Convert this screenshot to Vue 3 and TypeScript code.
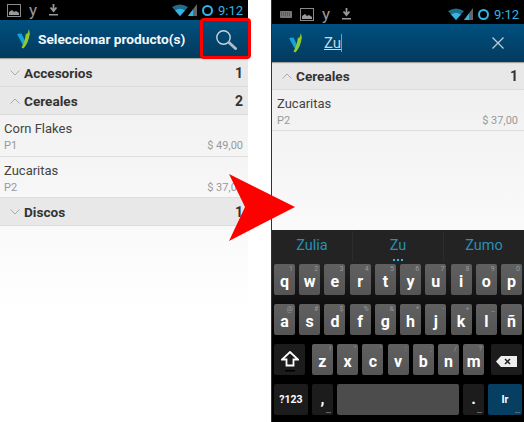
<script setup lang="ts">
const row1 = [
  ['q', '1'], ['w', '2'], ['e', '3'], ['r', '4'], ['t', '5'],
  ['y', '6'], ['u', '7'], ['i', '8'], ['o', '9'], ['p', '0']
]
const row2 = [
  ['a', '@'], ['s', '#'], ['d', '$'], ['f', '%'], ['g', '&'],
  ['h', '*'], ['j', '-'], ['k', '+'], ['l', '_'], ['ñ', '']
]
const row3 = [
  ['z', '!'], ['x', '"'], ['c', "'"], ['v', ':'], ['b', ';'], ['n', '/'], ['m', '?']
]
const suggestions = ['Zulia', 'Zu', 'Zumo']
</script>

<template>
  <div class="page">
    <div class="phone left">
      <div class="status">
        <div class="status-left">
          <svg class="ic-pic" width="14" height="13" viewBox="0 0 14 13">
            <rect x="0.5" y="0.5" width="13" height="12" fill="none" stroke="#8a8a8a" />
            <path d="M2 11 L2 8 L5 6 L7 8 L9 7 L12 9 L12 11 Z" fill="#9a9a9a" />
          </svg>
          <span class="ic-y">y</span>
          <svg class="ic-dl" width="9" height="12" viewBox="0 0 9 12">
            <path d="M4.5 0 V6 M1.5 3.5 L4.5 7 L7.5 3.5" fill="none" stroke="#9a9a9a" stroke-width="1.8" />
            <rect x="0" y="10" width="9" height="1.5" fill="#9a9a9a" />
          </svg>
        </div>
        <div class="status-right">
          <svg width="25" height="12" viewBox="0 0 25 12">
            <path d="M0 3 Q8 -2 16 3 L8 12 Z" fill="#1f6d8a" />
            <path d="M3 6.5 Q8 3 13 6.5 L8 12 Z" fill="#33b5e5" />
            <path d="M16 12 L25 0 V12 Z" fill="#666" />
            <path d="M16 12 L21 5.5 V12 Z" fill="#33b5e5" />
          </svg>
          <span class="ring"></span>
          <span class="clock">9:12</span>
        </div>
      </div>
      <div class="bar">
        <svg class="logo" width="13" height="20" viewBox="0 0 13 20">
          <path d="M0 5 L4.5 4.5 L8.5 13 L6.5 17 Z" fill="#12a5d6" />
          <path d="M12 0 L12.8 5 C11.8 11 10 16 6.5 19.5 L4.5 18.5 C7 14.5 8.2 9.5 8.8 5 L10.5 4.5 Z" fill="#8fcb2e" />
        </svg>
        <span class="title">Seleccionar producto(s)</span>
        <svg class="search" width="21" height="20" viewBox="0 0 21 20">
          <circle cx="7.5" cy="7.5" r="6.7" fill="none" stroke="#c9d3da" stroke-width="1.4" />
          <path d="M13 12.5 L19.5 18.5" stroke="#aebcc6" stroke-width="3" stroke-linecap="round" />
        </svg>
      </div>
      <div class="list">
        <div class="group">
          <svg class="chev" width="10" height="6" viewBox="0 0 10 6"><path d="M0.5 0.5 L5 5 L9.5 0.5" fill="none" stroke="#aaa" /></svg>
          <span class="group-name">Accesorios</span>
          <span class="group-count">1</span>
        </div>
        <div class="group">
          <svg class="chev" width="10" height="6" viewBox="0 0 10 6"><path d="M0.5 5.5 L5 1 L9.5 5.5" fill="none" stroke="#aaa" /></svg>
          <span class="group-name">Cereales</span>
          <span class="group-count">2</span>
        </div>
        <div class="item first">
          <div class="item-name">Corn Flakes</div>
          <div class="item-sub"><span>P1</span><span>$ 49,00</span></div>
        </div>
        <div class="item">
          <div class="item-name">Zucaritas</div>
          <div class="item-sub"><span>P2</span><span>$ 37,00</span></div>
        </div>
        <div class="group">
          <svg class="chev" width="10" height="6" viewBox="0 0 10 6"><path d="M0.5 0.5 L5 5 L9.5 0.5" fill="none" stroke="#aaa" /></svg>
          <span class="group-name">Discos</span>
          <span class="group-count">1</span>
        </div>
      </div>
    </div>

    <div class="phone right">
      <div class="status">
        <div class="status-left">
          <svg class="ic-kb" width="12" height="7" viewBox="0 0 12 7">
            <rect width="12" height="7" rx="1" fill="#777" />
            <path d="M1 2 H11 M1 4 H11" stroke="#444" stroke-dasharray="1 1" />
          </svg>
          <svg class="ic-pic" width="14" height="13" viewBox="0 0 14 13">
            <rect x="0.5" y="0.5" width="13" height="12" fill="none" stroke="#8a8a8a" />
            <path d="M2 11 L2 8 L5 6 L7 8 L9 7 L12 9 L12 11 Z" fill="#9a9a9a" />
          </svg>
          <span class="ic-y">y</span>
          <svg class="ic-dl" width="9" height="12" viewBox="0 0 9 12">
            <path d="M4.5 0 V6 M1.5 3.5 L4.5 7 L7.5 3.5" fill="none" stroke="#9a9a9a" stroke-width="1.8" />
            <rect x="0" y="10" width="9" height="1.5" fill="#9a9a9a" />
          </svg>
        </div>
        <div class="status-right">
          <svg width="25" height="12" viewBox="0 0 25 12">
            <path d="M0 3 Q8 -2 16 3 L8 12 Z" fill="#1f6d8a" />
            <path d="M3 6.5 Q8 3 13 6.5 L8 12 Z" fill="#33b5e5" />
            <path d="M16 12 L25 0 V12 Z" fill="#666" />
            <path d="M16 12 L21 5.5 V12 Z" fill="#33b5e5" />
          </svg>
          <span class="ring"></span>
          <span class="clock">9:12</span>
        </div>
      </div>
      <div class="bar search-bar">
        <svg class="logo" width="13" height="20" viewBox="0 0 13 20">
          <path d="M0 5 L4.5 4.5 L8.5 13 L6.5 17 Z" fill="#12a5d6" />
          <path d="M12 0 L12.8 5 C11.8 11 10 16 6.5 19.5 L4.5 18.5 C7 14.5 8.2 9.5 8.8 5 L10.5 4.5 Z" fill="#8fcb2e" />
        </svg>
        <span class="query"><u>Zu</u></span>
        <svg class="close" width="12" height="12" viewBox="0 0 12 12">
          <path d="M0.5 0.5 L11.5 11.5 M11.5 0.5 L0.5 11.5" stroke="#c5ced5" stroke-width="1.2" />
        </svg>
      </div>
      <div class="list short">
        <div class="group">
          <svg class="chev" width="10" height="6" viewBox="0 0 10 6"><path d="M0.5 5.5 L5 1 L9.5 5.5" fill="none" stroke="#aaa" /></svg>
          <span class="group-name">Cereales</span>
          <span class="group-count">1</span>
        </div>
        <div class="item">
          <div class="item-name">Zucaritas</div>
          <div class="item-sub"><span>P2</span><span>$ 37,00</span></div>
        </div>
      </div>
      <div class="keyboard">
        <div class="suggest">
          <span v-for="s in suggestions" :key="s" class="word" :class="{ mid: s === 'Zu' }">{{ s }}</span>
        </div>
        <div class="keys">
          <div class="row">
            <div v-for="k in row1" :key="k[0]" class="key"><small>{{ k[1] }}</small>{{ k[0] }}</div>
          </div>
          <div class="row">
            <div v-for="k in row2" :key="k[0]" class="key"><small>{{ k[1] }}</small>{{ k[0] }}</div>
          </div>
          <div class="row row3">
            <div class="key dark wide">
              <svg width="18" height="21" viewBox="0 0 18 21">
                <path d="M9 1 L17 8.5 H12.5 V14.5 H5.5 V8.5 H1 Z" fill="none" stroke="#fff" stroke-width="1.8" />
                <rect x="4" y="19" width="10" height="1.5" fill="#000" />
              </svg>
            </div>
            <div class="letters">
              <div v-for="k in row3" :key="k[0]" class="key"><small>{{ k[1] }}</small>{{ k[0] }}</div>
            </div>
            <div class="key dark wide">
              <svg width="21" height="11" viewBox="0 0 21 11">
                <path d="M0 5.5 L5 0 H21 V11 H5 Z" fill="#eee" />
                <path d="M9 3 L14 8 M14 3 L9 8" stroke="#222" stroke-width="1.5" />
              </svg>
            </div>
          </div>
          <div class="row row4">
            <div class="key dark num">?123</div>
            <div class="key dark punct">,</div>
            <div class="key space"></div>
            <div class="key dark punct">.</div>
            <div class="key go">Ir</div>
          </div>
        </div>
      </div>
    </div>

    <div class="red-box"></div>
    <svg class="arrow" width="66" height="67" viewBox="0 0 66 67">
      <polygon points="0,0 66,33 0,67 16,33" fill="#f00" />
    </svg>
  </div>
</template>

<style scoped>
.page {
  position: relative;
  width: 524px;
  height: 422px;
  display: flex;
  background: #fff;
  font-family: Roboto, "Liberation Sans", sans-serif;
  overflow: hidden;
}

.phone {
  display: flex;
  flex-direction: column;
  height: 100%;
}

.left {
  width: 248px;
  margin-right: 24px;
}

.right {
  width: 252px;
  box-shadow: -1px 0 0 #333;
}

.status {
  height: 20px;
  background: #000;
  display: flex;
  justify-content: space-between;
  align-items: center;
  padding: 0 5px 0 7px;
  flex-shrink: 0;
}

.right .status {
  height: 24px;
  padding-top: 4px;
  padding-left: 8px;
  box-sizing: border-box;
}

.status-left,
.status-right {
  display: flex;
  align-items: center;
}

.status-left {
  gap: 8px;
}

.ic-dl {
  margin-left: 4px;
}

.status-right {
  gap: 5px;
}

.ic-y {
  font-size: 17px;
  line-height: 13px;
  color: #9a9a9a;
}

.ring {
  width: 11px;
  height: 11px;
  box-sizing: border-box;
  border: 2px solid #33b5e5;
  border-radius: 50%;
}

.clock {
  font-size: 13px;
  color: #33b5e5;
}

.bar {
  height: 38px;
  flex-shrink: 0;
  display: flex;
  align-items: center;
  padding-left: 17px;
  background: linear-gradient(#00507f, #033a5e);
  box-shadow: 0 1px 1px rgba(0, 0, 0, 0.3);
  position: relative;
}

.title {
  margin-left: 8px;
  font-size: 13.7px;
  font-weight: 700;
  color: #f2f6f9;
}

.search {
  margin-left: auto;
  margin-right: 11px;
  margin-top: 1px;
}

.query {
  margin-left: 22px;
  font-size: 15px;
  color: #c4dbe9;
  border-right: 1px solid #33b5e5;
}

.close {
  margin-left: auto;
  margin-right: 20px;
}

.list {
  flex: 1;
  padding-top: 1px;
  background: linear-gradient(#eeeeee, #ffffff 70%);
}

.short {
  flex: none;
  height: 168px;
  padding-top: 0;
  box-sizing: border-box;
  background: linear-gradient(#eeeeee, #fafafa);
}

.group {
  height: 28px;
  box-sizing: border-box;
  display: flex;
  align-items: center;
  padding: 0 5px 0 10px;
  background: #e8e8e8;
  border-bottom: 1px solid #dcdcdc;
}

.right .group {
  padding-right: 6px;
}

.chev {
  margin-right: 4px;
}

.group-name {
  font-size: 13.6px;
  font-weight: 700;
  color: #333;
}

.group-count {
  margin-left: auto;
  font-size: 14px;
  font-weight: 700;
  color: #333;
}

.item {
  height: 41px;
  box-sizing: border-box;
  padding: 5px 5px 0 4px;
  border-bottom: 1px solid #dedede;
}

.item.first {
  height: 42px;
}

.right .item {
  padding-left: 5px;
  padding-right: 6px;
}

.item-name {
  font-size: 13px;
  line-height: 17px;
  color: #444;
}

.item-sub {
  display: flex;
  justify-content: space-between;
  margin-top: 2px;
  font-size: 11px;
  line-height: 14px;
  color: #999;
}

.keyboard {
  flex: 1;
  background: #000;
  display: flex;
  flex-direction: column;
}

.suggest {
  height: 32px;
  display: grid;
  grid-template-columns: 81px 91px 1fr;
  align-items: center;
  background: #232323;
  flex-shrink: 0;
}

.word {
  text-align: center;
  font-size: 14.5px;
  color: #2a8fb8;
  border-right: 1px solid #2d2d2d;
  line-height: 30px;
}

.word:last-child {
  border-right: none;
}

.word.mid {
  position: relative;
}

.word.mid::after {
  content: "";
  position: absolute;
  left: 50%;
  bottom: 0;
  margin-left: -5px;
  width: 10px;
  height: 2px;
  background: repeating-linear-gradient(90deg, #33b5e5 0 2px, transparent 2px 4px);
}

.keys {
  flex: 1;
  padding: 2px 2px 0 2px;
  display: flex;
  flex-direction: column;
  gap: 9px;
  background: linear-gradient(#232323, #000 45%);
}

.row {
  height: 31px;
  display: flex;
  justify-content: space-between;
}

.row3 .letters {
  display: flex;
  gap: 4.2px;
}

.key {
  position: relative;
  width: 21px;
  background: linear-gradient(#606060, #555);
  border-radius: 2px;
  color: #fff;
  font-size: 16px;
  font-weight: 700;
  display: flex;
  align-items: center;
  justify-content: center;
  padding-top: 3px;
  box-sizing: border-box;
}

.key small {
  position: absolute;
  top: 1px;
  right: 2px;
  font-size: 7px;
  font-weight: 400;
  color: #999;
}

.dark {
  background: #1c1c1c;
}

.wide {
  width: 31px;
}

.num {
  width: 34px;
  font-size: 10.5px;
  padding-top: 0;
}

.punct {
  align-items: flex-end;
  padding-bottom: 7px;
}

.space {
  width: 122px;
  background: #4c4c4c;
}

.go {
  width: 34px;
  background: #063f62;
  font-size: 10.5px;
  padding-top: 0;
}

.punct::after,
.go::after {
  content: "";
  position: absolute;
  right: 2px;
  bottom: 2px;
  width: 5px;
  height: 1px;
  background: #666;
}

.red-box {
  position: absolute;
  left: 200px;
  top: 18px;
  width: 51px;
  height: 41px;
  box-sizing: border-box;
  border: 3px solid #f00;
  border-radius: 4px;
}

.arrow {
  position: absolute;
  left: 229px;
  top: 174px;
}
</style>
